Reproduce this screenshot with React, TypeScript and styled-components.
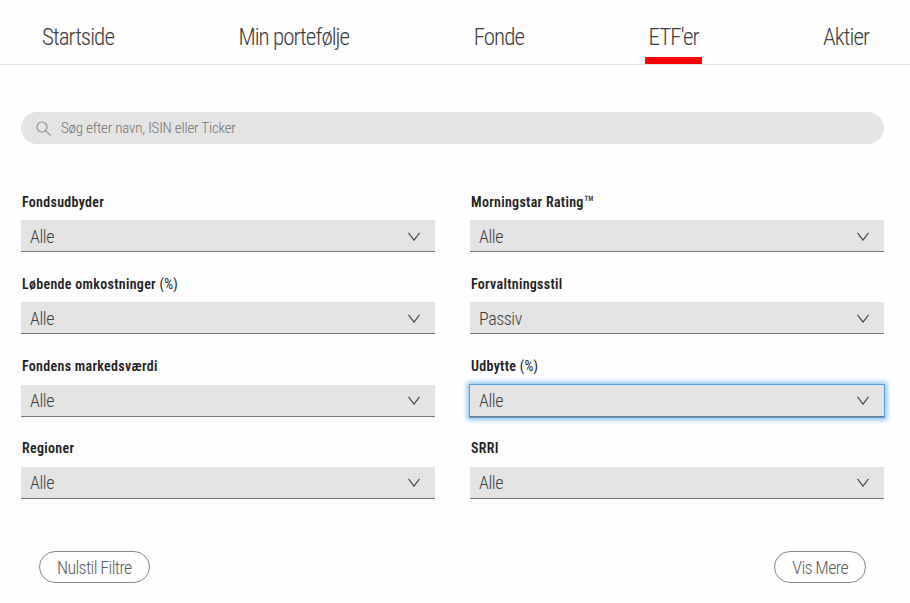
import React from 'react'
import styled, { createGlobalStyle } from 'styled-components'

const GlobalStyle = createGlobalStyle`
  html, body {
    margin: 0;
    padding: 0;
    background: #fefefe;
    font-family: 'Roboto', 'Liberation Sans', sans-serif;
    font-stretch: 75%;
    font-weight: 300;
    color: #333;
  }
`

const Page = styled.div`
  width: 910px;
  height: 603px;
  overflow: hidden;
`

const Nav = styled.nav`
  display: flex;
  justify-content: space-between;
  height: 64px;
  padding: 0 41px 0 42px;
  border-bottom: 1px solid #e4e4e4;
`

const Tab = styled.a<{ $active?: boolean }>`
  position: relative;
  font-size: 23px;
  letter-spacing: -0.95px;
  line-height: 75px;
  height: 64px;
  color: #3c3c3c;
  &::after {
    content: '';
    display: ${p => (p.$active ? 'block' : 'none')};
    position: absolute;
    left: -4px;
    right: -3px;
    bottom: 0;
    height: 7px;
    background: #f00;
  }
`

const Content = styled.main`
  padding: 47px 26px 0 21px;
`

const Search = styled.div`
  display: flex;
  align-items: center;
  gap: 10px;
  height: 32px;
  padding-left: 15px;
  border-radius: 16px;
  background: #e4e4e4;
  color: #707070;
  font-size: 15px;
  letter-spacing: -0.2px;
`

const Filters = styled.div`
  display: grid;
  grid-template-columns: 414px 414px;
  column-gap: 35px;
  row-gap: 22.2px;
  margin-top: 48.2px;
`

const Field = styled.div`
  display: flex;
  flex-direction: column;
`

const Label = styled.label`
  height: 20px;
  margin: -0.6px 0 8.6px;
  padding-left: 1px;
  font-size: 14px;
  letter-spacing: 0.3px;
  line-height: 20px;
  font-weight: 600;
  color: #222;
`

const LabelUnit = styled.span`
  font-weight: 400;
`

const TradeMark = styled.span`
  font-size: 20px;
  font-weight: 400;
  line-height: 0;
  letter-spacing: 0;
  vertical-align: -3px;
`

const Select = styled.div<{ $focused?: boolean }>`
  display: flex;
  align-items: center;
  justify-content: space-between;
  box-sizing: border-box;
  height: 32px;
  padding: 2px 15px 1px 9px;
  background: #e4e4e4;
  border-bottom: 1px solid #777;
  font-size: 18px;
  letter-spacing: -0.45px;
  color: #3c3c3c;
  ${p => p.$focused && 'box-shadow: 0 0 0 1px #4f9fe6, 0 0 5px 3px #8cc4f2;'}
`

const Actions = styled.div`
  display: flex;
  justify-content: space-between;
  margin-top: 52.2px;
  padding: 0 18px;
`

const Button = styled.button`
  height: 32px;
  padding: 2px 17px 0;
  border: 1px solid #888;
  border-radius: 16px;
  background: transparent;
  font-family: inherit;
  font-stretch: inherit;
  font-weight: 300;
  font-size: 18px;
  letter-spacing: -0.65px;
  color: #5c5c5c;
`

const Chevron = () => (
  <svg width="12" height="9" viewBox="0 0 12 9" fill="none" stroke="#444" strokeWidth="1.1">
    <path d="M0.5 0.8 L6 8.2 L11.5 0.8" />
  </svg>
)

const SearchIcon = () => (
  <svg width="15" height="15" viewBox="0 0 15 15" fill="none" stroke="#949494" strokeWidth="1.2">
    <circle cx="6" cy="6" r="5" />
    <path d="M9.6 9.6 L14.5 14.5" />
  </svg>
)

const tabs = ['Startside', 'Min portefølje', 'Fonde', "ETF'er", 'Aktier']

const filters = [
  { label: 'Fondsudbyder', value: 'Alle' },
  { label: 'Morningstar Rating', mark: true, value: 'Alle' },
  { label: 'Løbende omkostninger', unit: '(%)', value: 'Alle' },
  { label: 'Forvaltningsstil', value: 'Passiv' },
  { label: 'Fondens markedsværdi', value: 'Alle' },
  { label: 'Udbytte', unit: '(%)', value: 'Alle', focused: true },
  { label: 'Regioner', value: 'Alle' },
  { label: 'SRRI', value: 'Alle' },
]

export default function App() {
  return (
    <Page>
      <GlobalStyle />
      <Nav>
        {tabs.map(t => (
          <Tab key={t} $active={t === "ETF'er"}>
            {t}
          </Tab>
        ))}
      </Nav>
      <Content>
        <Search>
          <SearchIcon />
          Søg efter navn, ISIN eller Ticker
        </Search>
        <Filters>
          {filters.map(f => (
            <Field key={f.label}>
              <Label>
                {f.label}
                {f.mark && <TradeMark>™</TradeMark>}
                {f.unit && <LabelUnit> {f.unit}</LabelUnit>}
              </Label>
              <Select $focused={f.focused}>
                {f.value}
                <Chevron />
              </Select>
            </Field>
          ))}
        </Filters>
        <Actions>
          <Button>Nulstil Filtre</Button>
          <Button>Vis Mere</Button>
        </Actions>
      </Content>
    </Page>
  )
}
